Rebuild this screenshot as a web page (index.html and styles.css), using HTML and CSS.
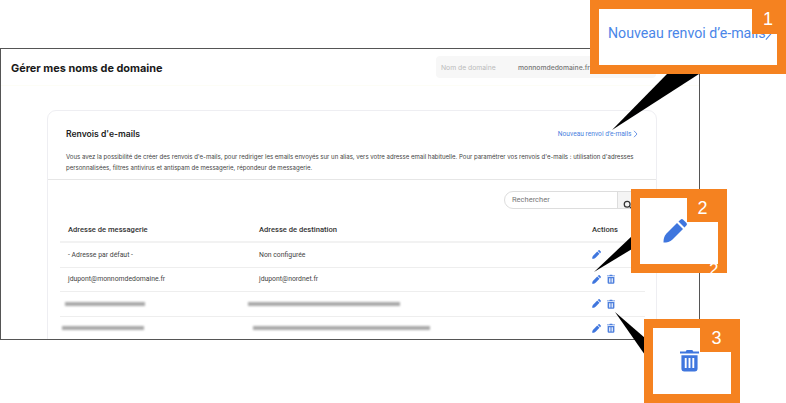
FILE: index.html
```html
<!DOCTYPE html>
<html lang="fr">
<head>
<meta charset="utf-8">
<title>Renvois d'e-mails</title>
<link rel="stylesheet" href="styles.css">
</head>
<body>
<svg class="defs" width="0" height="0" aria-hidden="true">
  <symbol id="pencil" viewBox="0 0 24 24">
    <path d="M.5 23.5C.5 20 1 17 3.5 14.5L14 4l6 6L9.5 20.5C7 23 4 23.5.5 23.5z"/>
    <path d="M15.5 2.5L17.5.7a2 2 0 0 1 2.7 0l3.1 3.1a2 2 0 0 1 0 2.7L21.5 8.5z"/>
  </symbol>
  <symbol id="trash" viewBox="0 0 20 24">
    <path d="M7 1.5h6L14 3h6v2.2H0V3h6z"/>
    <path fill-rule="evenodd" d="M1.5 7h17v14a3 3 0 0 1-3 3h-11a3 3 0 0 1-3-3zM5 10v10.500h2V10zM9 10v10.500h2V10zM13 10v10.500h2V10z"/>
  </symbol>
</svg>

<main class="frame">
  <header class="topbar">
    <h1 class="title">Gérer mes noms de domaine</h1>
    <div class="domain">
      <span class="domain-label">Nom de domaine</span>
      <span class="domain-value">monnomdedomaine.fr</span>
    </div>
  </header>

  <section class="card">
    <div class="card-head">
      <div class="card-title-row">
        <h2 class="card-title">Renvois d'e-mails</h2>
        <a class="new-link">Nouveau renvoi d’e-mails<svg class="chev" viewBox="0 0 5 8"><path d="M1 .8L4 4 1 7.200"/></svg></a>
      </div>
      <p class="desc">Vous avez la possibilité de créer des renvois d'e-mails, pour rediriger les emails envoyés sur un alias, vers votre adresse email habituelle. Pour paramétrer vos renvois d'e-mails : utilisation d'adresses personnalisées, filtres antivirus et antispam de messagerie, répondeur de messagerie.</p>
    </div>
    <div class="card-body">
      <div class="search">
        <span class="search-input">Rechercher</span>
        <span class="search-btn">
          <svg class="search-icon" viewBox="0 0 12 12"><circle cx="5" cy="5" r="3.5"/><path d="M8 8l3 3"/></svg>
        </span>
      </div>
      <div class="table">
        <div class="row head">
          <span>Adresse de messagerie</span>
          <span>Adresse de destination</span>
          <span>Actions</span>
        </div>
        <div class="row">
          <span>- Adresse par défaut -</span>
          <span>Non configurée</span>
          <span class="actions"><svg class="ico"><use href="#pencil"/></svg></span>
        </div>
        <div class="row">
          <span>jdupont@monnomdedomaine.fr</span>
          <span>jdupont@nordnet.fr</span>
          <span class="actions"><svg class="ico"><use href="#pencil"/></svg><svg class="ico-t"><use href="#trash"/></svg></span>
        </div>
        <div class="row">
          <span class="blur b1"></span>
          <span class="blur b2"></span>
          <span class="actions"><svg class="ico"><use href="#pencil"/></svg><svg class="ico-t"><use href="#trash"/></svg></span>
        </div>
        <div class="row">
          <span class="blur b3"></span>
          <span class="blur b4"></span>
          <span class="actions"><svg class="ico"><use href="#pencil"/></svg><svg class="ico-t"><use href="#trash"/></svg></span>
        </div>
      </div>
    </div>
  </section>
</main>

<svg class="pointers" width="786" height="403" aria-hidden="true">
  <polygon points="612,130 667,74 699,74"/>
  <polygon points="594,272 632,236 632,249"/>
  <polygon points="615,312 645,338 645,355"/>
</svg>

<aside class="callout c1">
  <span class="callout-link">Nouveau renvoi d’e-mails</span>
  <svg class="chev-big" viewBox="0 0 8 16"><path d="M1 1l6 7-6 7"/></svg>
  <span class="badge">1</span>
</aside>
<aside class="callout c2">
  <svg class="big-pencil"><use href="#pencil"/></svg>
  <span class="badge">2</span>
  <span class="stray">2</span>
</aside>
<aside class="callout c3">
  <svg class="big-trash"><use href="#trash"/></svg>
  <span class="badge">3</span>
</aside>
</body>
</html>
```

FILE: styles.css
```css
* { box-sizing: border-box; }
html, body { margin: 0; padding: 0; }
body {
  width: 786px;
  height: 403px;
  overflow: hidden;
  position: relative;
  background: #fff;
  font-family: "Roboto", "Liberation Sans", sans-serif;
  color: #333;
}
.defs { position: absolute; }

.frame {
  margin-top: 48px;
  width: 700px;
  height: 292px;
  border: 1px solid #555;
  overflow: hidden;
  background: #fff;
}
.topbar {
  height: 37px;
  padding: 7px 0 0 10px;
  display: flex;
  align-items: flex-start;
  justify-content: space-between;
  border-bottom: 1px solid #fdfdf6;
}
.title {
  margin: 4px 0 0;
  font-family: "Inter", sans-serif;
  font-size: 10.900px;
  line-height: 16px;
  font-weight: 700;
  color: #1a1a1a;
}
.domain {
  width: 220px;
  height: 22px;
  margin-right: 43px;
  padding-left: 5px;
  display: flex;
  align-items: center;
  gap: 19px;
  background: #f7f7f7;
  border-radius: 4px;
  font-family: "Inter", sans-serif;
  font-size: 6.800px;
  white-space: nowrap;
}
.domain-label { color: #bbb; flex: 0 0 58px; }
.domain-value { color: #777; font-weight: 500; }

.card {
  width: 610px;
  height: 300px;
  margin: 24px 0 0 46px;
  border: 1px solid #eeeef2;
  border-radius: 9px;
  background: #fff;
}
.card-head {
  height: 69px;
  padding: 16px 18px 0;
  border-bottom: 1px solid #e6e6e6;
}
.card-title-row {
  display: flex;
  justify-content: space-between;
  align-items: center;
  height: 13px;
}
.card-title {
  margin: 0;
  font-family: "Inter", sans-serif;
  font-size: 8.600px;
  font-weight: 600;
  color: #222;
}
.new-link {
  display: flex;
  align-items: center;
  font-size: 6.650px;
  color: #4a7fe0;
  white-space: nowrap;
}
.chev {
  width: 5px;
  height: 8px;
  margin-left: 1.500px;
  fill: none;
  stroke: #4a7fe0;
  stroke-width: .8;
}
.desc {
  margin: 11px 0 0;
  width: 580px;
  font-family: "Inter", sans-serif;
  font-size: 6.060px;
  line-height: 11px;
  color: #444;
}
.card-body { padding: 11px 12px 0; }
.search {
  margin-left: 444px;
  width: 150px;
  height: 18px;
  display: flex;
  border: 1px solid #ddd;
  border-radius: 9px 0 0 9px;
}
.search-input {
  flex: 1;
  padding-left: 7px;
  font-size: 7.500px;
  line-height: 16px;
  color: #777;
}
.search-btn {
  width: 36px;
  border-left: 1px solid #ddd;
  background: #f4f4f4;
  padding: 3px 5px;
}
.search-icon { width: 10px; height: 10px; fill: none; stroke: #333; stroke-width: 1.5; }

.table { margin-top: 6px; width: 585px; }
.row {
  display: grid;
  grid-template-columns: 191px 333px 1fr;
  align-items: center;
  height: 24.500px;
  padding-left: 8px;
  border-bottom: 1px solid #eee;
  font-size: 6.850px;
  color: #444;
}
.row.head {
  height: 28px;
  border-bottom: 2px solid #f2f2f2;
  font-size: 7.600px;
  font-weight: 500;
  color: #333;
  padding-top: 2px;
}
.actions { display: flex; align-items: center; gap: 6px; }
.ico { width: 9px; height: 9px; fill: #3f76de; }
.ico-t { width: 8px; height: 10px; fill: #4d7fdd; }

.blur {
  display: block;
  height: 4px;
  background: #a9a9a9;
  filter: blur(1.200px);
}
.b1 { width: 80px; margin-left: -3px; }
.b2 { width: 152px; margin-left: -11px; }
.b3 { width: 82px; margin-left: -6px; }
.b4 { width: 177px; margin-left: -6px; }

.pointers { position: absolute; left: 0; top: 0; fill: #000; }

.callout {
  position: absolute;
  background: #fff;
  border: 9px solid #f58220;
  overflow: hidden;
}
.badge {
  position: absolute;
  right: 0;
  top: 0;
  background: #f58220;
  color: #fff;
  font-family: "Liberation Sans", sans-serif;
  font-size: 18px;
  text-align: center;
}
.c1 { left: 590px; top: 0; width: 196px; height: 74px; }
.c1 .badge { width: 25px; height: 25px; line-height: 21px; padding-left: 7px; }
.callout-link {
  position: absolute;
  left: 9px;
  top: 15px;
  font-size: 14.200px;
  line-height: 19px;
  color: #4a86e8;
  white-space: nowrap;
}
.chev-big {
  position: absolute;
  right: 5px;
  top: 17px;
  width: 7px;
  height: 15px;
  fill: none;
  stroke: #4a86e8;
  stroke-width: 1.300;
}
.c2 { left: 631px; top: 189px; width: 96px; height: 84px; overflow: visible; }
.c2 .badge { width: 31px; height: 24px; line-height: 20px; }
.big-pencil { position: absolute; left: 23px; top: 21px; width: 24px; height: 24px; fill: #3f76de; }
.stray {
  position: absolute;
  left: 69px;
  top: 62px;
  height: 13px;
  font-family: "Liberation Sans", sans-serif;
  font-size: 17px;
  line-height: 19px;
  color: #fff;
  overflow: hidden;
}
.c3 { left: 644px; top: 319px; width: 96px; height: 84px; }
.c3 .badge { width: 31px; height: 24px; line-height: 20px; padding-left: 2px; }
.big-trash { position: absolute; left: 27px; top: 20px; width: 19px; height: 24px; fill: #3f76de; }
```
